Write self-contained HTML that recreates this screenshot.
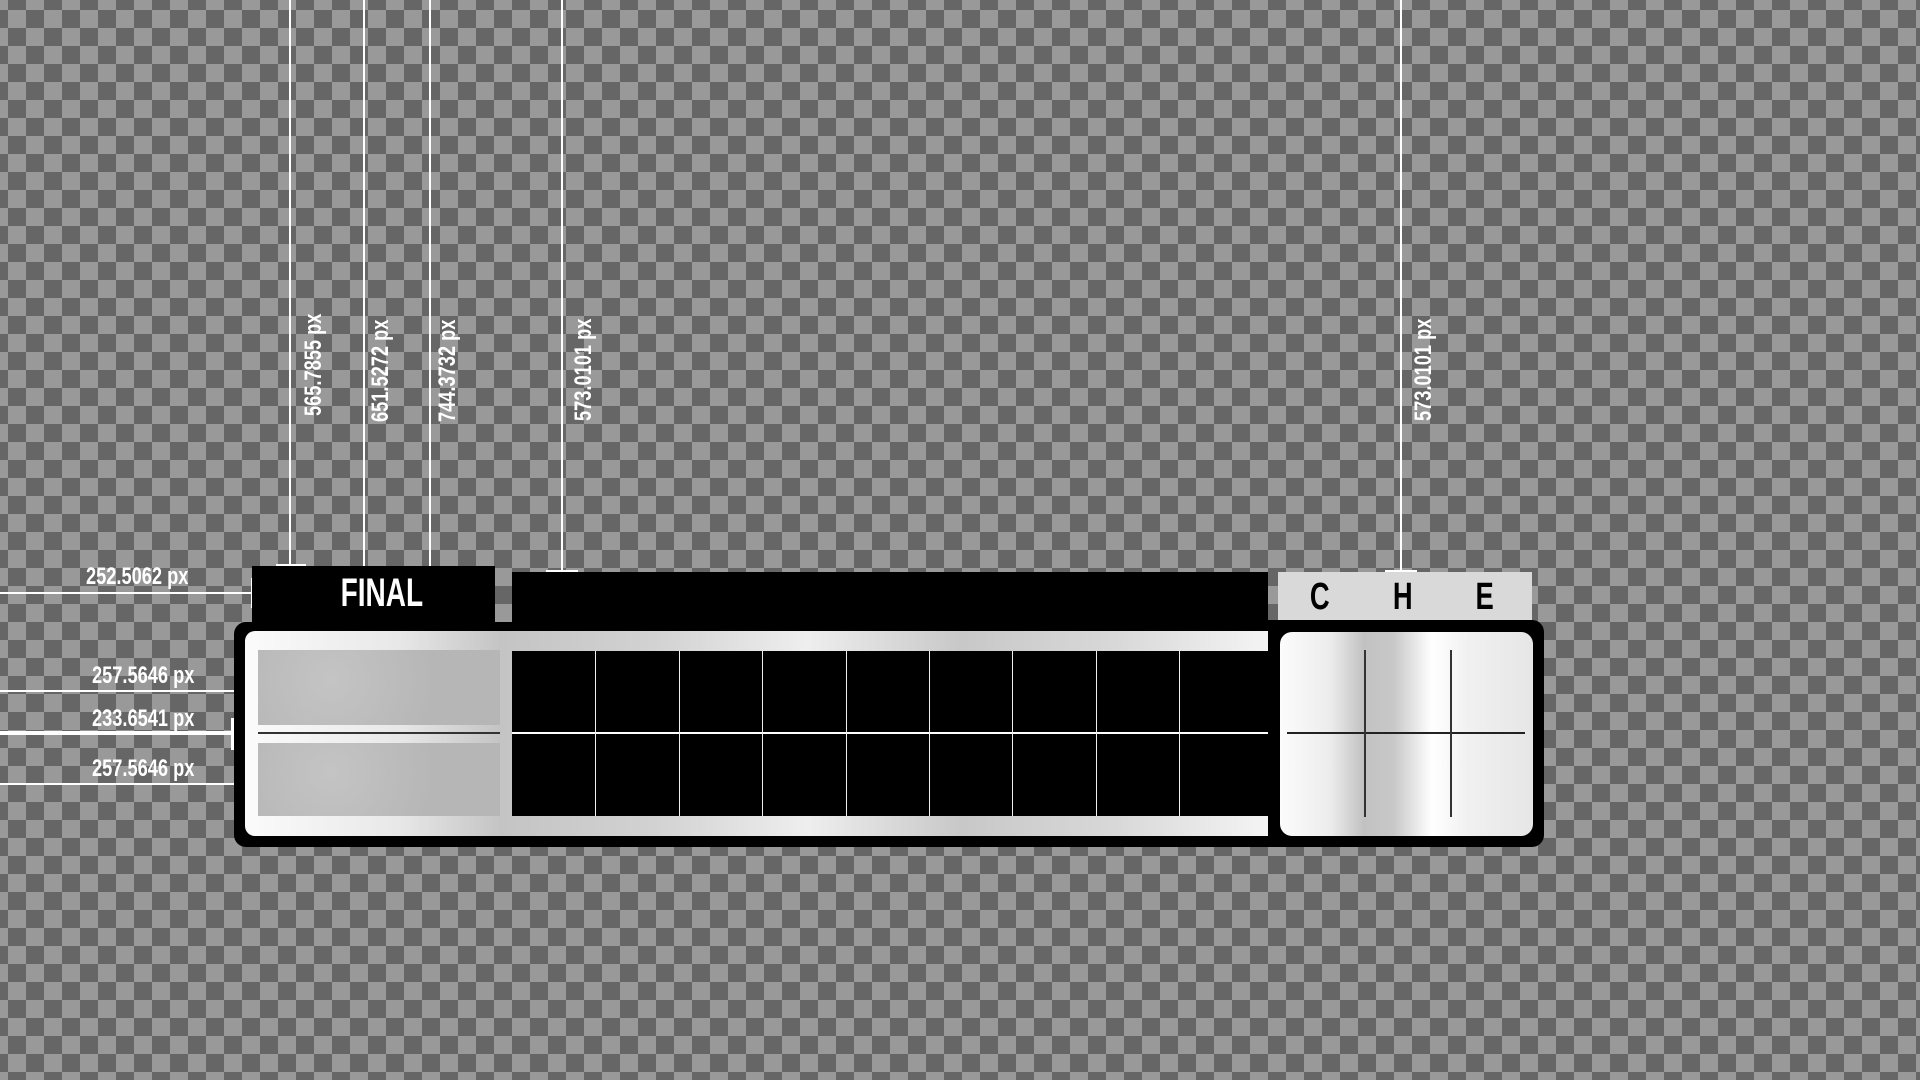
<!DOCTYPE html>
<html><head><meta charset="utf-8"><style>
html,body{margin:0;padding:0;width:1920px;height:1080px;overflow:hidden}
body{position:relative;background-color:#999;
background-image:linear-gradient(45deg,#666 25%,transparent 25%,transparent 75%,#666 75%),linear-gradient(45deg,#666 25%,transparent 25%,transparent 75%,#666 75%);
background-size:36px 36px;background-position:8px 10px,26px 28px;
font-family:"Liberation Sans Narrow","Liberation Sans",sans-serif;}
.a{position:absolute}
.w{background:#fff}
.lbl{position:absolute;color:#fff;font-weight:bold;font-size:24px;line-height:24px;white-space:nowrap;transform-origin:0 0}
.h{transform:scaleX(.76)}
.v{transform:rotate(-90deg) scaleX(.76)}
.silver{background:linear-gradient(90deg,#fbfbfb 0%,#e8e8e8 15%,#c4c4c4 25%,#d2d2d2 40%,#eee 55%,#c8c8c8 70%,#d8d8d8 85%,#f4f4f4 100%)}
.panel{background:#bcbcbc;background-image:radial-gradient(circle at 30% 40%,#c4c4c4 0,#b6b6b6 60%);}
</style></head><body>
<div class="a w" style="left:289px;top:0;width:2px;height:566px"></div>
<div class="a w" style="left:276px;top:564px;width:30px;height:2px"></div>
<div class="a w" style="left:363px;top:0;width:2px;height:650px"></div>
<div class="a w" style="left:349px;top:648px;width:30px;height:2px"></div>
<div class="a w" style="left:429px;top:0;width:2px;height:742px"></div>
<div class="a w" style="left:415px;top:740px;width:30px;height:2px"></div>
<div class="a w" style="left:561px;top:0;width:2px;height:572px"></div>
<div class="a w" style="left:546px;top:570px;width:32px;height:2px"></div>
<div class="a w" style="left:1400px;top:0;width:2px;height:572px"></div>
<div class="a w" style="left:1385px;top:570px;width:32px;height:2px"></div>
<div class="lbl v" style="left:302px;top:416px">565.7855 px</div>
<div class="lbl v" style="left:369px;top:422px">651.5272 px</div>
<div class="lbl v" style="left:436px;top:422px">744.3732 px</div>
<div class="lbl v" style="left:572px;top:421px">573.0101 px</div>
<div class="lbl v" style="left:1412px;top:421px">573.0101 px</div>
<div class="a w" style="left:0;top:592px;width:252px;height:2px"></div>
<div class="a w" style="left:251px;top:578px;width:2px;height:30px"></div>
<div class="a w" style="left:0;top:690px;width:257px;height:2px"></div>
<div class="a w" style="left:0;top:731px;width:233px;height:4px"></div>
<div class="a w" style="left:231px;top:718px;width:4px;height:32px"></div>
<div class="a w" style="left:0;top:783px;width:257px;height:2px"></div>
<div class="lbl h" style="left:86px;top:565px">252.5062 px</div>
<div class="lbl h" style="left:92px;top:664px">257.5646 px</div>
<div class="lbl h" style="left:92px;top:707px">233.6541 px</div>
<div class="lbl h" style="left:92px;top:757px">257.5646 px</div>
<div class="a" style="left:252px;top:566px;width:243px;height:60px;background:#000"></div>
<div class="a" style="left:260px;top:568px;width:243px;height:50px;color:#fff;font-weight:bold;font-size:40px;line-height:50px;text-align:center"><span style="display:inline-block;transform:scaleX(.7)">FINAL</span></div>
<div class="a" style="left:512px;top:572px;width:756px;height:58px;background:#000"></div>
<div class="a" style="left:234px;top:622px;width:1045px;height:225px;background:#000;border-radius:12px 0 0 12px"></div>
<div class="a silver" style="left:245px;top:631px;width:1023px;height:205px;border-radius:10px 0 0 10px"></div>
<div class="a panel" style="left:258px;top:650px;width:242px;height:75px"></div>
<div class="a panel" style="left:258px;top:743px;width:242px;height:73px"></div>
<div class="a" style="left:258px;top:732px;width:242px;height:2px;background:#333"></div>
<div class="a" style="left:512px;top:651px;width:756px;height:165px;background:#000"></div>
<div class="a" style="left:512px;top:732px;width:756px;height:2px;background:#fff"></div>
<div class="a" style="left:595px;top:651px;width:1px;height:165px;background:#eee"></div>
<div class="a" style="left:679px;top:651px;width:1px;height:165px;background:#eee"></div>
<div class="a" style="left:762px;top:651px;width:1px;height:165px;background:#eee"></div>
<div class="a" style="left:846px;top:651px;width:1px;height:165px;background:#eee"></div>
<div class="a" style="left:929px;top:651px;width:1px;height:165px;background:#eee"></div>
<div class="a" style="left:1012px;top:651px;width:1px;height:165px;background:#eee"></div>
<div class="a" style="left:1096px;top:651px;width:1px;height:165px;background:#eee"></div>
<div class="a" style="left:1179px;top:651px;width:1px;height:165px;background:#eee"></div>
<div class="a" style="left:1278px;top:572px;width:254px;height:50px;background:#d9d9d9"></div>
<div class="a" style="left:1268px;top:620px;width:276px;height:227px;background:#000;border-radius:0 12px 12px 0"></div>
<div class="a" style="left:1280px;top:632px;width:253px;height:204px;border-radius:12px;background:linear-gradient(90deg,#fcfcfc 0%,#ececec 20%,#c2c2c2 33%,#c8c8c8 45%,#fff 60%,#f0f0f0 75%,#e6e6e6 100%)"></div>
<div class="a" style="left:1287px;top:732px;width:238px;height:2px;background:#222"></div>
<div class="a" style="left:1364px;top:650px;width:2px;height:167px;background:#333"></div>
<div class="a" style="left:1450px;top:650px;width:2px;height:167px;background:#333"></div>
<div class="a" style="left:1300px;top:574px;width:40px;height:46px;text-align:center;font-weight:bold;font-size:38px;line-height:46px"><span style="display:inline-block;transform:scaleX(.72)">C</span></div>
<div class="a" style="left:1383px;top:574px;width:40px;height:46px;text-align:center;font-weight:bold;font-size:38px;line-height:46px"><span style="display:inline-block;transform:scaleX(.72)">H</span></div>
<div class="a" style="left:1465px;top:574px;width:40px;height:46px;text-align:center;font-weight:bold;font-size:38px;line-height:46px"><span style="display:inline-block;transform:scaleX(.72)">E</span></div>
</body></html>
